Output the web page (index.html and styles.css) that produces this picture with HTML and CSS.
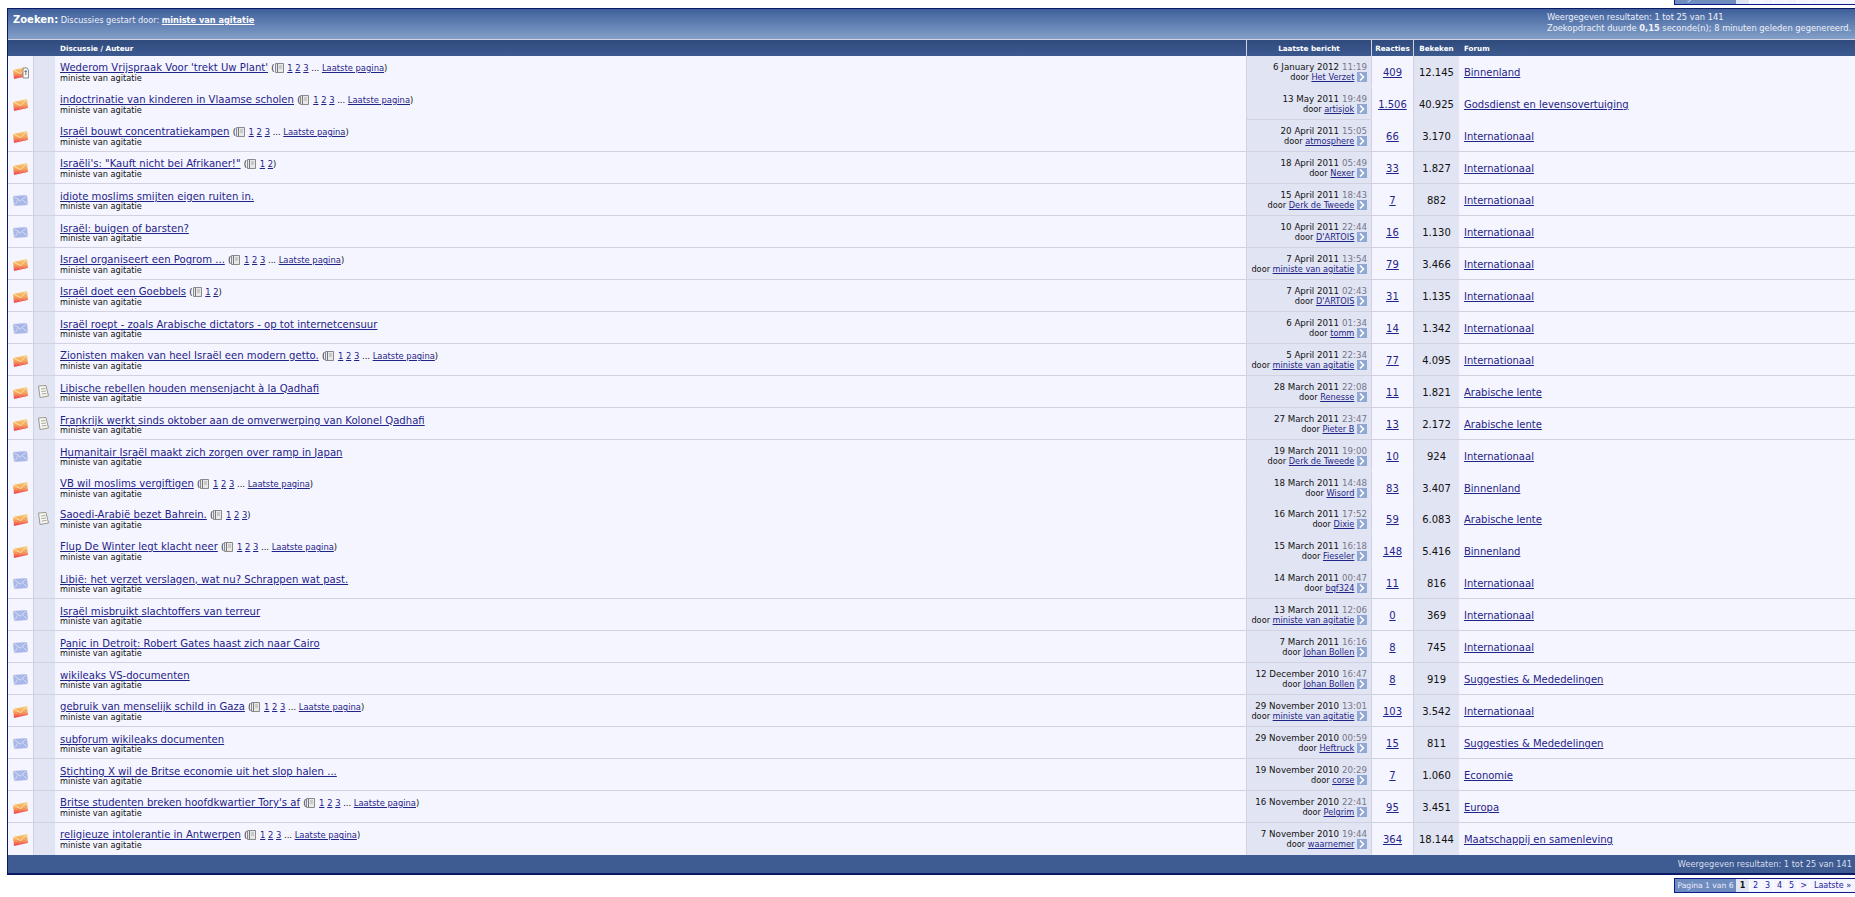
FILE: index.html
```html
<!DOCTYPE html>
<html lang="nl">
<head>
<meta charset="utf-8">
<title>Zoeken</title>
<link rel="stylesheet" href="styles.css">
</head>
<body>
<svg class="defs" width="0" height="0" aria-hidden="true">
  <defs>
    <linearGradient id="hot" x1="0" y1="0" x2="0" y2="1"><stop offset="0" stop-color="#f8cf78"/><stop offset=".5" stop-color="#f5a45e"/><stop offset="1" stop-color="#ee3f4c"/></linearGradient>
    <symbol id="env-hot" viewBox="0 0 15 12"><path d="M0 3 14 0 15 9 1 12Z" fill="url(#hot)"/><path d="M0 3 7.8 6.6 14 0" fill="none" stroke="#fbe0a0" stroke-width="1"/></symbol>
    <symbol id="env-cold" viewBox="0 0 15 12"><path d="M0 1 14 0 15 10 1 11Z" fill="#a9b6e8"/><path d="M0 1 7.5 6 14 0M1 11 5.5 4.5M15 10 9.5 4.5" fill="none" stroke="#d5dcf6" stroke-width="1"/></symbol>
    <symbol id="overlay" viewBox="0 0 7 12"><path d="M1 1H5L6.5 3V11H1Z" fill="#f8f8f8" stroke="#777" stroke-width=".8"/><path d="M3.8 3.5V8M2.5 5 3.8 3.5 5 5" fill="none" stroke="#555" stroke-width=".8"/></symbol>
    <symbol id="note" viewBox="0 0 11 13"><path d="M.5 1 8 .5 10.5 11 2 12.5Z" fill="#f7f7f2" stroke="#9a9a90"/><path d="M3 4 7.5 3.5M3.3 6.5 8 6M3.6 9 8.5 8.5" stroke="#a8a8a0"/></symbol>
    <symbol id="book" viewBox="0 0 9 10"><path d="M.5.5H8.5V9.5H.5Z" fill="#e8e8e8" stroke="#8a8a8a"/><path d="M2.5 1V9" stroke="#777"/><path d="M4 3H7M4 5H7" stroke="#aaa"/></symbol>
    <symbol id="go" viewBox="0 0 10 10"><rect width="10" height="10" fill="#90a8d2"/><path d="M3 1.5 6.5 5 3 8.5" fill="none" stroke="#fff" stroke-width="1.6"/></symbol>
  </defs>
</svg>

<div class="page">
  <div class="pager pager-top">
    <span class="pager-label">Pagina 1 van 6</span><span class="pager-cell cur">1</span><span class="pager-cell">2</span><span class="pager-cell">3</span><span class="pager-cell">4</span><span class="pager-cell">5</span><span class="pager-cell">&gt;</span><span class="pager-cell last">Laatste »</span>
  </div>

  <table class="results">
    <colgroup><col class="c-icon"><col class="c-note"><col><col class="c-last"><col class="c-rep"><col class="c-views"><col class="c-forum"></colgroup>
    <thead>
      <tr><th colspan="7" class="banner">
        <div class="banner-in">
          <div class="banner-l"><b class="zoek">Zoeken:</b> Discussies gestart door: <a href="#">ministe van agitatie</a></div>
          <div class="banner-r">Weergegeven resultaten: 1 tot 25 van 141<br>Zoekopdracht duurde <b>0,15</b> seconde(n); 8 minuten geleden gegenereerd.</div>
        </div>
      </th></tr>
      <tr class="heads">
        <th colspan="2"></th><th class="th-title">Discussie / Auteur</th><th class="sep">Laatste bericht</th><th class="sep">Reacties</th><th class="sep">Bekeken</th><th class="th-title">Forum</th>
      </tr>
    </thead>
    <tbody>
      <tr class="nl"><td class="i"><svg class="env"><use href="#env-hot"/></svg><svg class="ovl"><use href="#overlay"/></svg></td><td class="n"></td><td class="t"><a class="tt" href="#">Wederom Vrijspraak Voor 'trekt Uw Plant'</a> <span class="pp">(<svg class="bk"><use href="#book"/></svg> <a href="#">1</a> <a href="#">2</a> <a href="#">3</a> ... <a href="#">Laatste pagina</a>)</span><div class="au">ministe van agitatie</div></td><td class="l"><div class="d">6 January 2012 <span class="tm">11:19</span></div><div class="b">door <a href="#">Het Verzet</a> <svg class="go"><use href="#go"/></svg></div></td><td class="r"><a href="#">409</a></td><td class="v">12.145</td><td class="f"><a href="#">Binnenland</a></td></tr>
      <tr class="nl lp"><td class="i"><svg class="env"><use href="#env-hot"/></svg></td><td class="n"></td><td class="t"><a class="tt" href="#">indoctrinatie van kinderen in Vlaamse scholen</a> <span class="pp">(<svg class="bk"><use href="#book"/></svg> <a href="#">1</a> <a href="#">2</a> <a href="#">3</a> ... <a href="#">Laatste pagina</a>)</span><div class="au">ministe van agitatie</div></td><td class="l"><div class="d">13 May 2011 <span class="tm">19:49</span></div><div class="b">door <a href="#">artisjok</a> <svg class="go"><use href="#go"/></svg></div></td><td class="r"><a href="#">1.506</a></td><td class="v">40.925</td><td class="f"><a href="#">Godsdienst en levensovertuiging</a></td></tr>
      <tr><td class="i"><svg class="env"><use href="#env-hot"/></svg></td><td class="n"></td><td class="t"><a class="tt" href="#">Israël bouwt concentratiekampen</a> <span class="pp">(<svg class="bk"><use href="#book"/></svg> <a href="#">1</a> <a href="#">2</a> <a href="#">3</a> ... <a href="#">Laatste pagina</a>)</span><div class="au">ministe van agitatie</div></td><td class="l"><div class="d">20 April 2011 <span class="tm">15:05</span></div><div class="b">door <a href="#">atmosphere</a> <svg class="go"><use href="#go"/></svg></div></td><td class="r"><a href="#">66</a></td><td class="v">3.170</td><td class="f"><a href="#">Internationaal</a></td></tr>
      <tr><td class="i"><svg class="env"><use href="#env-hot"/></svg></td><td class="n"></td><td class="t"><a class="tt" href="#">Israëli's: "Kauft nicht bei Afrikaner!"</a> <span class="pp">(<svg class="bk"><use href="#book"/></svg> <a href="#">1</a> <a href="#">2</a>)</span><div class="au">ministe van agitatie</div></td><td class="l"><div class="d">18 April 2011 <span class="tm">05:49</span></div><div class="b">door <a href="#">Nexer</a> <svg class="go"><use href="#go"/></svg></div></td><td class="r"><a href="#">33</a></td><td class="v">1.827</td><td class="f"><a href="#">Internationaal</a></td></tr>
      <tr><td class="i"><svg class="env"><use href="#env-cold"/></svg></td><td class="n"></td><td class="t"><a class="tt" href="#">idiote moslims smijten eigen ruiten in.</a><div class="au">ministe van agitatie</div></td><td class="l"><div class="d">15 April 2011 <span class="tm">18:43</span></div><div class="b">door <a href="#">Derk de Tweede</a> <svg class="go"><use href="#go"/></svg></div></td><td class="r"><a href="#">7</a></td><td class="v">882</td><td class="f"><a href="#">Internationaal</a></td></tr>
      <tr><td class="i"><svg class="env"><use href="#env-cold"/></svg></td><td class="n"></td><td class="t"><a class="tt" href="#">Israël: buigen of barsten?</a><div class="au">ministe van agitatie</div></td><td class="l"><div class="d">10 April 2011 <span class="tm">22:44</span></div><div class="b">door <a href="#">D'ARTOIS</a> <svg class="go"><use href="#go"/></svg></div></td><td class="r"><a href="#">16</a></td><td class="v">1.130</td><td class="f"><a href="#">Internationaal</a></td></tr>
      <tr><td class="i"><svg class="env"><use href="#env-hot"/></svg></td><td class="n"></td><td class="t"><a class="tt" href="#">Israel organiseert een Pogrom ...</a> <span class="pp">(<svg class="bk"><use href="#book"/></svg> <a href="#">1</a> <a href="#">2</a> <a href="#">3</a> ... <a href="#">Laatste pagina</a>)</span><div class="au">ministe van agitatie</div></td><td class="l"><div class="d">7 April 2011 <span class="tm">13:54</span></div><div class="b">door <a href="#">ministe van agitatie</a> <svg class="go"><use href="#go"/></svg></div></td><td class="r"><a href="#">79</a></td><td class="v">3.466</td><td class="f"><a href="#">Internationaal</a></td></tr>
      <tr><td class="i"><svg class="env"><use href="#env-hot"/></svg></td><td class="n"></td><td class="t"><a class="tt" href="#">Israël doet een Goebbels</a> <span class="pp">(<svg class="bk"><use href="#book"/></svg> <a href="#">1</a> <a href="#">2</a>)</span><div class="au">ministe van agitatie</div></td><td class="l"><div class="d">7 April 2011 <span class="tm">02:43</span></div><div class="b">door <a href="#">D'ARTOIS</a> <svg class="go"><use href="#go"/></svg></div></td><td class="r"><a href="#">31</a></td><td class="v">1.135</td><td class="f"><a href="#">Internationaal</a></td></tr>
      <tr><td class="i"><svg class="env"><use href="#env-cold"/></svg></td><td class="n"></td><td class="t"><a class="tt" href="#">Israël roept - zoals Arabische dictators - op tot internetcensuur</a><div class="au">ministe van agitatie</div></td><td class="l"><div class="d">6 April 2011 <span class="tm">01:34</span></div><div class="b">door <a href="#">tomm</a> <svg class="go"><use href="#go"/></svg></div></td><td class="r"><a href="#">14</a></td><td class="v">1.342</td><td class="f"><a href="#">Internationaal</a></td></tr>
      <tr><td class="i"><svg class="env"><use href="#env-hot"/></svg></td><td class="n"></td><td class="t"><a class="tt" href="#">Zionisten maken van heel Israël een modern getto.</a> <span class="pp">(<svg class="bk"><use href="#book"/></svg> <a href="#">1</a> <a href="#">2</a> <a href="#">3</a> ... <a href="#">Laatste pagina</a>)</span><div class="au">ministe van agitatie</div></td><td class="l"><div class="d">5 April 2011 <span class="tm">22:34</span></div><div class="b">door <a href="#">ministe van agitatie</a> <svg class="go"><use href="#go"/></svg></div></td><td class="r"><a href="#">77</a></td><td class="v">4.095</td><td class="f"><a href="#">Internationaal</a></td></tr>
      <tr><td class="i"><svg class="env"><use href="#env-hot"/></svg></td><td class="n"><svg class="note"><use href="#note"/></svg></td><td class="t"><a class="tt" href="#">Libische rebellen houden mensenjacht à la Qadhafi</a><div class="au">ministe van agitatie</div></td><td class="l"><div class="d">28 March 2011 <span class="tm">22:08</span></div><div class="b">door <a href="#">Renesse</a> <svg class="go"><use href="#go"/></svg></div></td><td class="r"><a href="#">11</a></td><td class="v">1.821</td><td class="f"><a href="#">Arabische lente</a></td></tr>
      <tr><td class="i"><svg class="env"><use href="#env-hot"/></svg></td><td class="n"><svg class="note"><use href="#note"/></svg></td><td class="t"><a class="tt" href="#">Frankrijk werkt sinds oktober aan de omverwerping van Kolonel Qadhafi</a><div class="au">ministe van agitatie</div></td><td class="l"><div class="d">27 March 2011 <span class="tm">23:47</span></div><div class="b">door <a href="#">Pieter B</a> <svg class="go"><use href="#go"/></svg></div></td><td class="r"><a href="#">13</a></td><td class="v">2.172</td><td class="f"><a href="#">Arabische lente</a></td></tr>
      <tr class="nl"><td class="i"><svg class="env"><use href="#env-cold"/></svg></td><td class="n"></td><td class="t"><a class="tt" href="#">Humanitair Israël maakt zich zorgen over ramp in Japan</a><div class="au">ministe van agitatie</div></td><td class="l"><div class="d">19 March 2011 <span class="tm">19:00</span></div><div class="b">door <a href="#">Derk de Tweede</a> <svg class="go"><use href="#go"/></svg></div></td><td class="r"><a href="#">10</a></td><td class="v">924</td><td class="f"><a href="#">Internationaal</a></td></tr>
      <tr class="nl short"><td class="i"><svg class="env"><use href="#env-hot"/></svg></td><td class="n"></td><td class="t"><a class="tt" href="#">VB wil moslims vergiftigen</a> <span class="pp">(<svg class="bk"><use href="#book"/></svg> <a href="#">1</a> <a href="#">2</a> <a href="#">3</a> ... <a href="#">Laatste pagina</a>)</span><div class="au">ministe van agitatie</div></td><td class="l"><div class="d">18 March 2011 <span class="tm">14:48</span></div><div class="b">door <a href="#">Wisord</a> <svg class="go"><use href="#go"/></svg></div></td><td class="r"><a href="#">83</a></td><td class="v">3.407</td><td class="f"><a href="#">Binnenland</a></td></tr>
      <tr class="nl"><td class="i"><svg class="env"><use href="#env-hot"/></svg></td><td class="n"><svg class="note"><use href="#note"/></svg></td><td class="t"><a class="tt" href="#">Saoedi-Arabië bezet Bahrein.</a> <span class="pp">(<svg class="bk"><use href="#book"/></svg> <a href="#">1</a> <a href="#">2</a> <a href="#">3</a>)</span><div class="au">ministe van agitatie</div></td><td class="l"><div class="d">16 March 2011 <span class="tm">17:52</span></div><div class="b">door <a href="#">Dixie</a> <svg class="go"><use href="#go"/></svg></div></td><td class="r"><a href="#">59</a></td><td class="v">6.083</td><td class="f"><a href="#">Arabische lente</a></td></tr>
      <tr class="nl"><td class="i"><svg class="env"><use href="#env-hot"/></svg></td><td class="n"></td><td class="t"><a class="tt" href="#">Flup De Winter legt klacht neer</a> <span class="pp">(<svg class="bk"><use href="#book"/></svg> <a href="#">1</a> <a href="#">2</a> <a href="#">3</a> ... <a href="#">Laatste pagina</a>)</span><div class="au">ministe van agitatie</div></td><td class="l"><div class="d">15 March 2011 <span class="tm">16:18</span></div><div class="b">door <a href="#">Fieseler</a> <svg class="go"><use href="#go"/></svg></div></td><td class="r"><a href="#">148</a></td><td class="v">5.416</td><td class="f"><a href="#">Binnenland</a></td></tr>
      <tr><td class="i"><svg class="env"><use href="#env-cold"/></svg></td><td class="n"></td><td class="t"><a class="tt" href="#">Libië: het verzet verslagen, wat nu? Schrappen wat past.</a><div class="au">ministe van agitatie</div></td><td class="l"><div class="d">14 March 2011 <span class="tm">00:47</span></div><div class="b">door <a href="#">bqf324</a> <svg class="go"><use href="#go"/></svg></div></td><td class="r"><a href="#">11</a></td><td class="v">816</td><td class="f"><a href="#">Internationaal</a></td></tr>
      <tr><td class="i"><svg class="env"><use href="#env-cold"/></svg></td><td class="n"></td><td class="t"><a class="tt" href="#">Israël misbruikt slachtoffers van terreur</a><div class="au">ministe van agitatie</div></td><td class="l"><div class="d">13 March 2011 <span class="tm">12:06</span></div><div class="b">door <a href="#">ministe van agitatie</a> <svg class="go"><use href="#go"/></svg></div></td><td class="r"><a href="#">0</a></td><td class="v">369</td><td class="f"><a href="#">Internationaal</a></td></tr>
      <tr><td class="i"><svg class="env"><use href="#env-cold"/></svg></td><td class="n"></td><td class="t"><a class="tt" href="#">Panic in Detroit: Robert Gates haast zich naar Cairo</a><div class="au">ministe van agitatie</div></td><td class="l"><div class="d">7 March 2011 <span class="tm">16:16</span></div><div class="b">door <a href="#">Johan Bollen</a> <svg class="go"><use href="#go"/></svg></div></td><td class="r"><a href="#">8</a></td><td class="v">745</td><td class="f"><a href="#">Internationaal</a></td></tr>
      <tr><td class="i"><svg class="env"><use href="#env-cold"/></svg></td><td class="n"></td><td class="t"><a class="tt" href="#">wikileaks VS-documenten</a><div class="au">ministe van agitatie</div></td><td class="l"><div class="d">12 December 2010 <span class="tm">16:47</span></div><div class="b">door <a href="#">Johan Bollen</a> <svg class="go"><use href="#go"/></svg></div></td><td class="r"><a href="#">8</a></td><td class="v">919</td><td class="f"><a href="#">Suggesties &amp; Mededelingen</a></td></tr>
      <tr><td class="i"><svg class="env"><use href="#env-hot"/></svg></td><td class="n"></td><td class="t"><a class="tt" href="#">gebruik van menselijk schild in Gaza</a> <span class="pp">(<svg class="bk"><use href="#book"/></svg> <a href="#">1</a> <a href="#">2</a> <a href="#">3</a> ... <a href="#">Laatste pagina</a>)</span><div class="au">ministe van agitatie</div></td><td class="l"><div class="d">29 November 2010 <span class="tm">13:01</span></div><div class="b">door <a href="#">ministe van agitatie</a> <svg class="go"><use href="#go"/></svg></div></td><td class="r"><a href="#">103</a></td><td class="v">3.542</td><td class="f"><a href="#">Internationaal</a></td></tr>
      <tr><td class="i"><svg class="env"><use href="#env-cold"/></svg></td><td class="n"></td><td class="t"><a class="tt" href="#">subforum wikileaks documenten</a><div class="au">ministe van agitatie</div></td><td class="l"><div class="d">29 November 2010 <span class="tm">00:59</span></div><div class="b">door <a href="#">Heftruck</a> <svg class="go"><use href="#go"/></svg></div></td><td class="r"><a href="#">15</a></td><td class="v">811</td><td class="f"><a href="#">Suggesties &amp; Mededelingen</a></td></tr>
      <tr><td class="i"><svg class="env"><use href="#env-cold"/></svg></td><td class="n"></td><td class="t"><a class="tt" href="#">Stichting X wil de Britse economie uit het slop halen ...</a><div class="au">ministe van agitatie</div></td><td class="l"><div class="d">19 November 2010 <span class="tm">20:29</span></div><div class="b">door <a href="#">corse</a> <svg class="go"><use href="#go"/></svg></div></td><td class="r"><a href="#">7</a></td><td class="v">1.060</td><td class="f"><a href="#">Economie</a></td></tr>
      <tr><td class="i"><svg class="env"><use href="#env-hot"/></svg></td><td class="n"></td><td class="t"><a class="tt" href="#">Britse studenten breken hoofdkwartier Tory's af</a> <span class="pp">(<svg class="bk"><use href="#book"/></svg> <a href="#">1</a> <a href="#">2</a> <a href="#">3</a> ... <a href="#">Laatste pagina</a>)</span><div class="au">ministe van agitatie</div></td><td class="l"><div class="d">16 November 2010 <span class="tm">22:41</span></div><div class="b">door <a href="#">Pelgrim</a> <svg class="go"><use href="#go"/></svg></div></td><td class="r"><a href="#">95</a></td><td class="v">3.451</td><td class="f"><a href="#">Europa</a></td></tr>
      <tr class="nl"><td class="i"><svg class="env"><use href="#env-hot"/></svg></td><td class="n"></td><td class="t"><a class="tt" href="#">religieuze intolerantie in Antwerpen</a> <span class="pp">(<svg class="bk"><use href="#book"/></svg> <a href="#">1</a> <a href="#">2</a> <a href="#">3</a> ... <a href="#">Laatste pagina</a>)</span><div class="au">ministe van agitatie</div></td><td class="l"><div class="d">7 November 2010 <span class="tm">19:44</span></div><div class="b">door <a href="#">waarnemer</a> <svg class="go"><use href="#go"/></svg></div></td><td class="r"><a href="#">364</a></td><td class="v">18.144</td><td class="f"><a href="#">Maatschappij en samenleving</a></td></tr>
    </tbody>
    <tfoot>
      <tr><td colspan="7" class="foot">Weergegeven resultaten: 1 tot 25 van 141</td></tr>
    </tfoot>
  </table>

  <div class="pager pager-bottom">
    <span class="pager-label">Pagina 1 van 6</span><span class="pager-cell cur">1</span><span class="pager-cell">2</span><span class="pager-cell">3</span><span class="pager-cell">4</span><span class="pager-cell">5</span><span class="pager-cell">&gt;</span><span class="pager-cell last">Laatste »</span>
  </div>
</div>
</body>
</html>
```
FILE: styles.css
```css
html, body { margin: 0; padding: 0; background: #fff; overflow: hidden; height: 100%; }
body { font-family: "DejaVu Sans", Verdana, sans-serif; color: #111; }
.defs { position: absolute; }
.page { padding-left: 7px; }

a { color: #1f2488; }

/* pagination */
.pager { display: flex; justify-content: flex-end; margin-left: auto; width: 181px; height: 15px; box-sizing: border-box; border: 1px solid #0b198c; border-right: 0; font-size: 8px; line-height: 13px; background: #fff; white-space: nowrap; }
.pager-top { margin-top: -10px; margin-bottom: 3px; }
.pager-bottom { margin-top: 3px; }
.pager-label { flex: 1 1 auto; background: #6e8cbe; color: #eef; text-align: center; font-size: 7.6px; }
.pager-cell { flex: 0 0 11px; margin-left: 1px; background: #f5f5ff; color: #22229c; text-align: center; }
.pager-cell.cur { flex-basis: 13px; margin-left: 0; background: #e1e4f2; color: #111; font-weight: bold; }
.pager-cell.last { flex-basis: 45px; }

/* table */
.results { width: 100%; table-layout: fixed; border-collapse: separate; border-spacing: 0; border: 1px solid #0b1a66; border-right: 0; background: #f5f5ff; }
.c-icon { width: 25px; }
.c-note { width: 22px; }
.c-last { width: 125px; }
.c-rep { width: 42px; }
.c-views { width: 46px; }
.c-forum { width: 396px; }

.banner { height: 31px; box-sizing: border-box; padding: 0; background: linear-gradient(#3f5f9b, #83a0c8); border-bottom: 1px solid #d1d1e1; color: #eef0fa; font-weight: normal; text-align: left; }
.banner-in { display: flex; justify-content: space-between; align-items: center; font-size: 8.2px; white-space: nowrap; }
.banner-l { padding: 0 0 9px 5px; }
.banner-l a { color: #fff; font-weight: bold; }
.zoek { font-size: 10px; color: #fff; }
.banner-r { width: 308px; font-size: 8.3px; line-height: 11px; padding-bottom: 2px; }

.heads th { height: 16px; box-sizing: border-box; padding: 0; background: linear-gradient(#2f4a7c, #3d5a90); color: #fff; font-size: 7.2px; font-weight: bold; line-height: 15px; text-align: center; }
.heads .sep { border-left: 1px solid #d1d1e1; }
.heads .th-title { text-align: left; padding-left: 5px; }

tbody td { height: 32px; box-sizing: border-box; padding: 0; border-bottom: 1px solid #d1d1e1; vertical-align: middle; background: #f5f5ff; }
tbody tr.short td { height: 31px; }
tbody tr.nl td { border-bottom-color: transparent; background-clip: padding-box; }
tbody tr.nl td.n, tbody tr.nl td.l, tbody tr.nl td.v { border-bottom-color: #e1e4f2; }
tbody tr.lp td.l { border-bottom-color: #d1d1e1; }

.i { position: relative; text-align: center; line-height: 0; padding-top: 2px; }
.env { width: 15px; height: 12px; }
.ovl { position: absolute; left: 14px; top: 11px; width: 7px; height: 12px; }
.n { background: #e1e4f2 !important; border-left: 1px solid #d1d1e1; text-align: center; line-height: 0; }
.note { width: 11px; height: 13px; margin-right: 2px; }

.t { padding: 3px 5px 0 !important; font-size: 10px; line-height: 11px; white-space: nowrap; overflow: hidden; }
.tt { font-size: 10.1px; }
.pp { font-size: 8.4px; color: #111; }
.bk { width: 9px; height: 10px; vertical-align: -2px; margin-right: 1px; }
.au { font-size: 8.2px; line-height: 11px; margin-top: -1px; }

.l { background: #e1e4f2 !important; border-left: 1px solid #d1d1e1; padding: 1px 4px 0 0 !important; text-align: right; white-space: nowrap; font-size: 8.2px; line-height: 10px; }
.d { font-size: 8.7px; }
.b { font-size: 8.2px; }
.tm { color: #76768c; }
.go { width: 10px; height: 10px; vertical-align: -2px; }

.r { border-left: 1px solid #d1d1e1; text-align: center; font-size: 10px; padding-top: 2px; }
.v { background: #e1e4f2 !important; border-left: 1px solid #d1d1e1; text-align: center; font-size: 10px; padding-top: 2px; }
.f { padding: 2px 0 0 5px !important; font-size: 10px; }

.foot { height: 19px; box-sizing: border-box; background: #3e5c92; border-bottom: 1px solid #0b1a66; padding: 0 3px 0 0; color: #d9deef; font-size: 8.2px; text-align: right; }
```
